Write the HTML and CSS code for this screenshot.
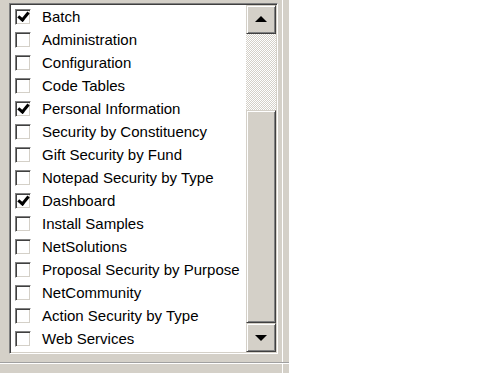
FILE: index.html
```html
<!DOCTYPE html>
<html>
<head>
<meta charset="utf-8">
<link rel="stylesheet" href="styles.css">
</head>
<body>
<div class="panel">
  <div class="listbox">
    <ul class="items">
      <li><span class="cb on"></span>Batch</li>
      <li><span class="cb"></span>Administration</li>
      <li><span class="cb"></span>Configuration</li>
      <li><span class="cb"></span>Code Tables</li>
      <li><span class="cb on"></span>Personal Information</li>
      <li><span class="cb"></span>Security by Constituency</li>
      <li><span class="cb"></span>Gift Security by Fund</li>
      <li><span class="cb"></span>Notepad Security by Type</li>
      <li><span class="cb on"></span>Dashboard</li>
      <li><span class="cb"></span>Install Samples</li>
      <li><span class="cb"></span>NetSolutions</li>
      <li><span class="cb"></span>Proposal Security by Purpose</li>
      <li><span class="cb"></span>NetCommunity</li>
      <li><span class="cb"></span>Action Security by Type</li>
      <li><span class="cb"></span>Web Services</li>
    </ul>
    <div class="scrollbar">
      <div class="btn"><span class="arrow up"></span></div>
      <div class="track"></div>
      <div class="thumb"></div>
      <div class="btn"><span class="arrow down"></span></div>
    </div>
  </div>
  <div class="groove"></div>
</div>
</body>
</html>
```
FILE: styles.css
```css
html, body {
  margin: 0;
  padding: 0;
  background: #ffffff;
  width: 500px;
  height: 373px;
  overflow: hidden;
}
.panel {
  width: 283px;
  height: 373px;
  background: #d4d0c8;
  border-right: 1px solid #ffffff;
  box-shadow: 6px 0 0 #d4d0c8;
  padding: 3px 0 0 9px;
  box-sizing: border-box;
  display: flex;
  flex-direction: column;
}
.listbox {
  width: 269px;
  height: 351px;
  box-sizing: border-box;
  border-style: solid;
  border-width: 1px;
  border-color: #808080 #ffffff #ffffff #808080;
  box-shadow: inset 1px 1px 0 #404040, inset -1px -1px 0 #d4d0c8;
  padding: 1px;
  background: #ffffff;
  display: flex;
}
.items {
  list-style: none;
  margin: 0;
  padding: 0 0 0 4px;
  flex: 1;
  background: #fff;
  font-family: "Liberation Sans", Arial, sans-serif;
  font-size: 15px;
  color: #000;
  overflow: hidden;
}
.items li {
  height: 23px;
  display: flex;
  align-items: center;
  white-space: nowrap;
}
.cb {
  width: 16px;
  height: 16px;
  box-sizing: border-box;
  border-style: solid;
  border-width: 1px;
  border-color: #808080 #ffffff #ffffff #808080;
  box-shadow: inset 1px 1px 0 #404040, inset -1px -1px 0 #d4d0c8;
  background: #fff;
  margin-right: 11px;
  flex: none;
  position: relative;
}
.cb.on::after {
  content: "";
  position: absolute;
  left: 3px;
  top: 1px;
  width: 4px;
  height: 8px;
  border-right: 3px solid #000;
  border-bottom: 3px solid #000;
  transform: rotate(40deg);
  transform-origin: 50% 50%;
  left: 4px;
  top: 0px;
}
.scrollbar {
  width: 30px;
  display: flex;
  flex-direction: column;
  background: #d4d0c8;
}
.btn, .thumb {
  background: #d4d0c8;
  box-sizing: border-box;
  border-style: solid;
  border-width: 1px;
  border-color: #d4d0c8 #404040 #404040 #d4d0c8;
  box-shadow: inset 1px 1px 0 #ffffff, inset -1px -1px 0 #808080;
  display: flex;
  align-items: center;
  justify-content: center;
}
.btn {
  height: 29px;
  flex: none;
}
.track {
  height: 76px;
  flex: none;
  background-color: #ffffff;
  background-image: repeating-conic-gradient(#d4d0c8 0 25%, #ffffff 0 50%);
  background-size: 2px 2px;
}
.thumb {
  flex: 1;
}
.arrow {
  width: 0;
  height: 0;
  border-left: 6px solid transparent;
  border-right: 6px solid transparent;
}
.arrow.up {
  border-bottom: 6px solid #000;
  margin-top: -1px;
}
.arrow.down {
  border-top: 6px solid #000;
  margin-top: 1px;
}
.groove {
  margin-top: 8px;
  margin-left: -9px;
  width: 289px;
  height: 1px;
  background: #a0a0a0;
  border-bottom: 1px solid #ffffff;
}
```
